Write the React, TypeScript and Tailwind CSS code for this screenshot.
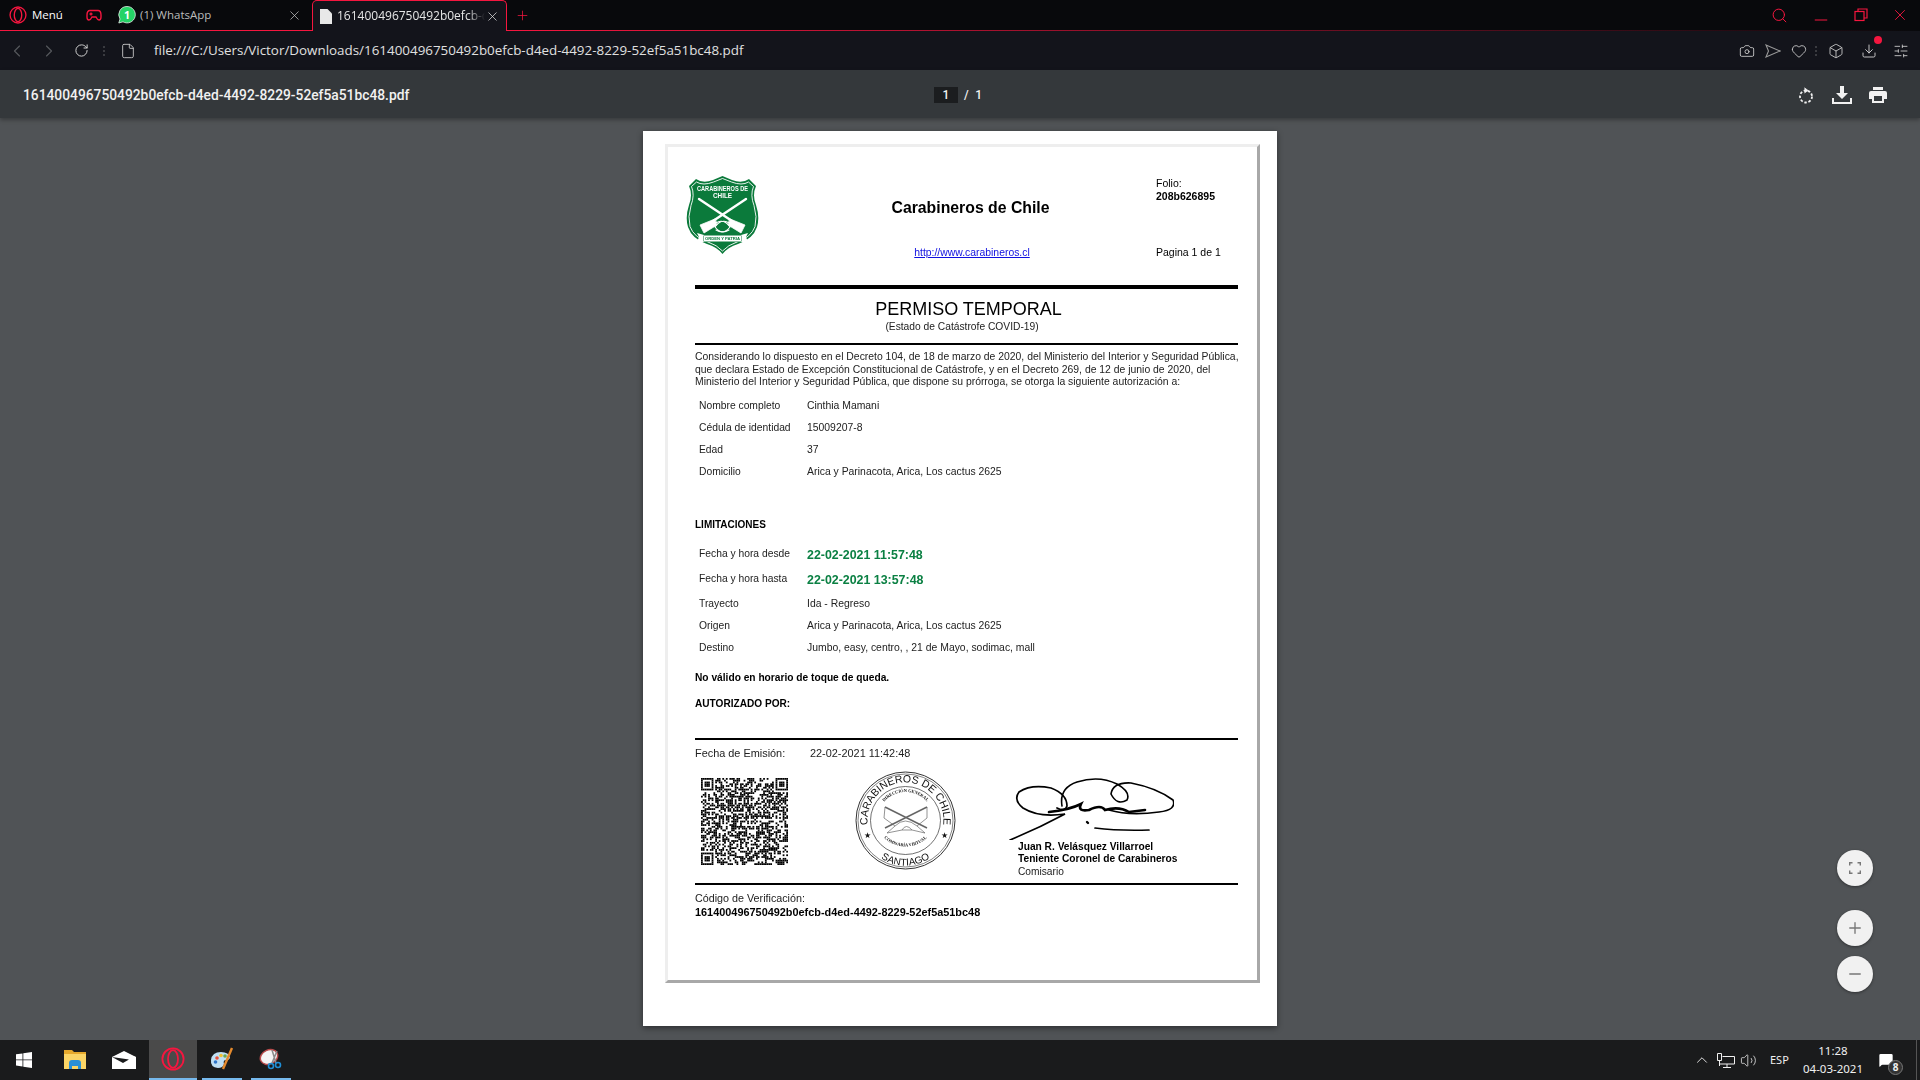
import type { ReactNode } from 'react';
import { ChevronLeft, ChevronRight, RotateCw, File, Camera, Heart, Box, Download, SlidersHorizontal, Search, X, Minus, Plus, ChevronUp, Volume2, MessageSquare } from 'lucide-react';

const RED = '#f5163f';
const urlName = '161400496750492b0efcb-d4ed-4492-8229-52ef5a51bc48';

const Opera = ({ size = 18 }: { size?: number }) => (
  <svg width={size} height={size} viewBox="0 0 24 24" fill="none" stroke={RED} strokeWidth="1.8">
    <circle cx="12" cy="12" r="10.6" />
    <ellipse cx="12" cy="12" rx="5" ry="8.8" />
  </svg>
);

// fake QR matrix, same look as the real one but not scannable
const qrSize = 49;
const finder = (x: number, y: number, ox: number, oy: number) => {
  const dx = x - ox;
  const dy = y - oy;
  if (dx < -1 || dy < -1 || dx > 7 || dy > 7) return null;
  if (dx < 0 || dy < 0 || dx > 6 || dy > 6) return false;
  if (dx === 0 || dy === 0 || dx === 6 || dy === 6) return true;
  if (dx === 1 || dy === 1 || dx === 5 || dy === 5) return false;
  return true;
};
const qrCells: [number, number][] = [];
let seed = 12345;
for (let y = 0; y < qrSize; y++) {
  for (let x = 0; x < qrSize; x++) {
    seed = (seed * 1103515245 + 12345) & 0x7fffffff;
    const f = finder(x, y, 0, 0) ?? finder(x, y, 42, 0) ?? finder(x, y, 0, 42);
    if (f === null ? (seed >> 16) % 100 < 52 : f) qrCells.push([x, y]);
  }
}

const QrCode = () => (
  <svg width="87" height="87" viewBox="0 0 49 49" className="shrink-0">
    {qrCells.map(([x, y]) => (
      <rect key={`${x}-${y}`} x={x} y={y} width="1" height="1" fill="#000" />
    ))}
  </svg>
);

const Shield = () => (
  <svg width="73" height="80" viewBox="0 0 73 80" className="shrink-0">
    <path d="M36.5 1 L46 5 Q56 9 63 4 L70 11 Q66 20 70 30 Q74 42 71 52 Q67 64 52 69 Q42 72 36.5 79 Q31 72 21 69 Q6 64 2 52 Q-1 42 3 30 Q7 20 3 11 L10 4 Q17 9 27 5 Z" fill="#0b7a3b" />
    <path d="M36.500 3.500 L45.500 7 Q56 11 62.500 7 L67.500 11.500 Q64 20 68 30.500 Q71.500 42 69 51.500 Q65 62.500 51 67 Q42 70 36.500 76 Q31 70 22 67 Q8 62.500 4 51.500 Q1.500 42 5 30.500 Q9 20 5.500 11.500 L10.500 7 Q17 11 27.500 7 Z" fill="none" stroke="#fff" strokeWidth="0.9" />
    <text x="36.500" y="15.500" textAnchor="middle" fontSize="6.400" fontWeight="bold" fill="#fff" fontFamily="'Liberation Sans', sans-serif" textLength="51" lengthAdjust="spacingAndGlyphs">CARABINEROS DE</text>
    <text x="36.500" y="22.500" textAnchor="middle" fontSize="6.400" fontWeight="bold" fill="#fff" fontFamily="'Liberation Sans', sans-serif">CHILE</text>
    <g stroke="#fff" strokeLinecap="round" fill="none">
      <path d="M13 24 L52 50" strokeWidth="2.400" />
      <path d="M60 24 L21 50" strokeWidth="2.400" />
      <path d="M44 44 L59 50 L55 58 L42 50 Z" fill="#fff" strokeWidth="0.8" />
      <path d="M29 44 L14 50 L18 58 L31 50 Z" fill="#fff" strokeWidth="0.8" />
      <path d="M24 53 Q36 40 44 52 Q38 60 30 55" strokeWidth="1.100" />
      <path d="M49 53 Q37 40 29 52 Q35 60 43 55" strokeWidth="1.100" />
    </g>
    <path d="M11 58 L18 60 L55 60 L62 58 L60 62 L62 67 L11 67 L13 62 Z" fill="#fff" />
    <rect x="17.500" y="60.500" width="38" height="6" fill="#0b7a3b" />
    <rect x="18" y="61" width="37" height="5" fill="#fff" />
    <text x="36.500" y="65" textAnchor="middle" fontSize="4.200" fill="#0b7a3b" fontFamily="'Liberation Sans', sans-serif" fontWeight="bold">ORDEN Y PATRIA</text>
  </svg>
);

const Seal = () => (
  <svg width="101" height="99" viewBox="0 0 101 99" className="shrink-0">
    <defs>
      <path id="sealTop" d="M15 63 A38 38 0 1 1 86 63" />
      <path id="sealBottom" d="M21.500 84 A45 45 0 0 0 79.500 84" />
      <path id="sealInner" d="M22 49.500 A28.500 28.500 0 0 1 79 49.500" />
      <path id="sealInner2" d="M20 50 A31 31 0 0 0 81 50" />
    </defs>
    <ellipse cx="50.500" cy="49.500" rx="49.500" ry="48.500" fill="none" stroke="#333" strokeWidth="1" />
    <ellipse cx="50.500" cy="49.500" rx="47.500" ry="46.500" fill="none" stroke="#333" strokeWidth="0.6" />
    <ellipse cx="50.500" cy="49.500" rx="35" ry="34" fill="none" stroke="#333" strokeWidth="0.7" />
    <text fontSize="10.500" fill="#111" fontFamily="'Liberation Sans', sans-serif"><textPath href="#sealTop" startOffset="50%" textAnchor="middle">CARABINEROS DE CHILE</textPath></text>
    <text fontSize="10" fill="#111" fontFamily="'Liberation Sans', sans-serif"><textPath href="#sealBottom" startOffset="50%" textAnchor="middle">SANTIAGO</textPath></text>
    <text fontSize="4.400" fontWeight="bold" fill="#111" fontFamily="'Liberation Serif', serif"><textPath href="#sealInner" startOffset="50%" textAnchor="middle">DIRECCIÓN GENERAL</textPath></text>
    <text fontSize="4.400" fontWeight="bold" fill="#111" fontFamily="'Liberation Serif', serif"><textPath href="#sealInner2" startOffset="50%" textAnchor="middle">COMISARÍA VIRTUAL</textPath></text>
    <text x="12" y="67" textAnchor="middle" fontSize="8" fill="#111">★</text>
    <text x="89" y="67" textAnchor="middle" fontSize="8" fill="#111">★</text>
    <g stroke="#666" fill="none" strokeWidth="0.7">
      <path d="M30 36 L72 57 M72 36 L30 57" strokeWidth="1.500" />
      <path d="M30 36 L29 47 L40 55 L32 62 L47 59 L57 59 L70 62 L62 55 L72 47 L72 36" />
      <path d="M40 55 Q50 45 62 55 M47 59 Q51 52 57 59" />
    </g>
  </svg>
);

const Signature = () => (
  <svg width="165" height="64" viewBox="0 0 165 64" fill="none" stroke="#000" strokeLinecap="round" className="shrink-0">
    <path d="M1 64 Q30 52 56 38 Q30 42 14 32 Q4 24 10 16 Q22 8 42 12 Q58 18 58 30 Q56 36 48 32" strokeWidth="1.700" />
    <path d="M53 30 Q50 12 68 6 Q90 -1 108 8 Q122 16 118 24 Q108 30 102 18 Q104 6 122 7 Q148 12 164 24 Q168 34 150 36 Q120 40 100 34" strokeWidth="1.600" />
    <path d="M40 36 Q60 34 72 28 Q68 36 80 34 Q92 28 96 34 Q110 30 120 36 L136 34" strokeWidth="2.600" />
    <path d="M78 46 L79 47" strokeWidth="2.400" />
    <path d="M86 52 Q110 55 140 54" strokeWidth="1.700" />
  </svg>
);

const Row = ({ label, value, tall, green }: { label: string; value: string; tall?: boolean; green?: boolean }) => (
  <div className={`flex items-center pl-1 ${tall ? 'h-[25px]' : 'h-[22px]'}`}>
    <span className="w-[108px] shrink-0 text-[10.3px] leading-3 text-[#222]">{label}</span>
    {green ? (
      <span className="pt-0.5 text-[12.4px] font-bold leading-4 text-[#0b8043]">{value}</span>
    ) : (
      <span className="text-[10.4px] leading-3 text-[#222]">{value}</span>
    )}
  </div>
);

const Paper = () => (
  <div className="h-[895px] w-[634px] shrink-0 bg-white pl-[22px] pt-[13px] shadow-[0_2px_6px_rgba(0,0,0,0.45)] font-['Liberation_Sans',Arial,sans-serif]">
    <div className="h-[839px] w-[595px] border-[3px] border-t-[#eeeeee] border-l-[#eeeeee] border-r-[#a8a8a8] border-b-[#a8a8a8] text-black blur-[0.3px]">
      {/* Header */}
      <div className="flex h-[138px] pl-[18px]">
        <div className="pt-[28px]"><Shield /></div>
        <div className="flex w-[397px] flex-col items-center pl-[26px] pt-[51px]">
          <div className="text-[15.8px] font-bold leading-5">Carabineros de Chile</div>
          <a className="ml-[3px] mt-[29px] text-[10.4px] leading-3 text-[#1010e0] underline">http://www.carabineros.cl</a>
        </div>
        <div className="pt-[30px] text-[10.5px] leading-3">
          <div>Folio:</div>
          <div className="mt-px font-bold">208b626895</div>
          <div className="mt-[44px]">Pagina 1 de 1</div>
        </div>
      </div>

      {/* Body */}
      <div className="ml-[27px] w-[543px]">
        <div className="h-1 bg-black" />
        <div className="mt-[9px] pl-[4px] text-center text-lg leading-[22px]">PERMISO TEMPORAL</div>
        <div className="mt-px pr-[9px] text-center text-[10.25px] leading-3 text-[#222]">(Estado de Catástrofe COVID-19)</div>
        <div className="mt-2.5 h-0.5 bg-black" />
        <div className="mt-1.5 h-[44px] whitespace-nowrap text-[10.4px] leading-[12.5px] text-[#222]">
          <div>Considerando lo dispuesto en el Decreto 104, de 18 de marzo de 2020, del Ministerio del Interior y Seguridad Pública,</div>
          <div>que declara Estado de Excepción Constitucional de Catástrofe, y en el Decreto 269, de 12 de junio de 2020, del</div>
          <div>Ministerio del Interior y Seguridad Pública, que dispone su prórroga, se otorga la siguiente autorización a:</div>
        </div>
        <Row label="Nombre completo" value="Cinthia Mamani" />
        <Row label="Cédula de identidad" value="15009207-8" />
        <Row label="Edad" value="37" />
        <Row label="Domicilio" value="Arica y Parinacota, Arica, Los cactus 2625" />
        <div className="mt-9 text-[10px] font-bold leading-3">LIMITACIONES</div>
        <div className="mt-2.5">
          <Row tall green label="Fecha y hora desde" value="22-02-2021 11:57:48" />
          <Row tall green label="Fecha y hora hasta" value="22-02-2021 13:57:48" />
          <div className="mt-0.5">
            <Row label="Trayecto" value="Ida - Regreso" />
            <Row label="Origen" value="Arica y Parinacota, Arica, Los cactus 2625" />
            <Row label="Destino" value="Jumbo, easy, centro, , 21 de Mayo, sodimac, mall" />
          </div>
        </div>
        <div className="mt-[13px] text-[10.2px] font-bold leading-3">No válido en horario de toque de queda.</div>
        <div className="mt-3.5 text-[10.1px] font-bold leading-3">AUTORIZADO POR:</div>
        <div className="mt-7 h-0.5 bg-black" />
        <div className="mt-1.5 flex text-[10.9px] leading-[14px] text-[#222]">
          <span className="w-[115px]">Fecha de Emisión:</span>
          <span>22-02-2021 11:42:48</span>
        </div>
        <div className="mt-[11px] flex h-[112px]">
          <div className="ml-1.5 mt-[7px]"><QrCode /></div>
          <div className="ml-[67px]"><Seal /></div>
          <div className="ml-[53px] mt-[5px]">
            <Signature />
            <div className="ml-[9px] mt-px text-[10.2px] leading-3">
              <div className="font-bold">Juan R. Velásquez Villarroel</div>
              <div className="font-bold">Teniente Coronel de Carabineros</div>
              <div className="leading-[13px] text-[#222]">Comisario</div>
            </div>
          </div>
        </div>
        <div className="h-0.5 bg-black" />
        <div className="mt-1.5 text-[10.75px] leading-[14px] text-[#222]">Código de Verificación:</div>
        <div className="text-[10.9px] font-bold leading-[14px]">{urlName}</div>
      </div>
    </div>
  </div>
);

const ZoomBtn = ({ children, className }: { children: ReactNode; className: string }) => (
  <button className={`absolute left-[1837px] flex h-9 w-9 items-center justify-center rounded-full bg-[#f1f1f1] text-[#777] shadow-[0_1px_3px_rgba(0,0,0,0.4)] ${className}`}>
    {children}
  </button>
);

export default function App() {
  return (
    <div className="relative flex h-[1080px] w-[1920px] flex-col overflow-hidden font-['Open_Sans',sans-serif]">
      {/* Tab strip */}
      <div className="flex h-[31px] shrink-0 items-end bg-[#08090c] text-[13px] text-[#d8d8d8]">
        <div className="flex h-[31px] w-[312px] items-center border-b border-[#f5163f]">
          <span className="ml-[9px]"><Opera /></span>
          <span className="ml-[5px] w-[44px] text-[11.5px] text-white">Menú</span>
          <svg width="16" height="12" viewBox="0 0 16 12" fill="none" stroke="#f5163f" strokeWidth="1.4" className="ml-[10px]">
            <path d="M4 1.500h8q3 0 3 4.500v2q0 3-2 3-1.500 0-3-3H6q-1.500 3-3 3-2 0-2-3V6q0-4.500 3-4.500Z" />
            <path d="M3.500 5h3M5 3.500v3M11 4.500v.1M12.500 6v.1" />
          </svg>
          <svg width="18" height="18" viewBox="0 0 18 18" className="ml-4">
            <path d="M9 .5a8.200 8.200 0 1 1-4 15.300L.8 17l1.200-4A8.200 8.200 0 0 1 9 .5Z" fill="#25d366" stroke="#e8e8e8" strokeWidth="0.8" />
            <text x="9" y="12.500" textAnchor="middle" fontSize="10.500" fontWeight="bold" fill="#fff" fontFamily="'Open Sans', sans-serif">1</text>
          </svg>
          <span className="ml-1 w-[147px] text-[11.5px] text-[#bbbbbb]">(1) WhatsApp</span>
          <X size={15} strokeWidth={1.2} className="text-[#c0c0c0]" />
        </div>
        <div className="flex h-[31px] w-[195px] items-center rounded-t-[5px] border-x border-t border-[#f5163f] bg-[#13141b] pl-[7px]">
          <svg width="12" height="15" viewBox="0 0 12 15" fill="#e8e8e8"><path d="M0 0h7.500L12 4.500V15H0Z" /></svg>
          <span className="ml-[5px] w-[148px] overflow-hidden whitespace-nowrap text-xs text-[#e6e6e6] [mask-image:linear-gradient(to_right,#000_88%,transparent)]">{urlName}</span>
          <X size={15} strokeWidth={1.2} className="text-[#e0e0e0]" />
        </div>
        <div className="flex h-[31px] flex-1 flex-col">
          <div className="flex min-h-0 flex-1 items-center pl-[8px]">
            <Plus size={15} strokeWidth={1.2} className="text-[#f5163f]" />
            <div className="ml-auto flex items-center pr-[11px] text-[#f5163f]">
              <Search size={17} strokeWidth={1.4} />
              <Minus size={20} strokeWidth={1.2} className="ml-[23px] mt-[10px]" />
              <svg width="14" height="14" viewBox="0 0 14 14" fill="none" stroke="#f5163f" strokeWidth="1.2" className="ml-[23px]">
                <rect x="1" y="3.500" width="9" height="9" /><path d="M4 3.500V1h9v9h-3" />
              </svg>
              <X size={18} strokeWidth={1.2} className="ml-[23px]" />
            </div>
          </div>
          <div className="h-px bg-gradient-to-r from-[#f5163f] to-transparent" />
        </div>
      </div>

      {/* Address bar */}
      <div className="flex h-[39px] shrink-0 items-center bg-[#13141b] text-sm text-[#e0e0e0]">
        <ChevronLeft size={20} strokeWidth={1.4} className="ml-[7px] text-[#55575c]" />
        <ChevronRight size={20} strokeWidth={1.4} className="ml-3 text-[#55575c]" />
        <RotateCw size={15} strokeWidth={1.6} className="ml-[15px] text-[#d0d0d0]" />
        <span className="ml-[14px] h-[10px] w-0.5 border-l-2 border-dotted border-[#3a3b40]" />
        <File size={16} strokeWidth={1.3} className="ml-[15px] text-[#d0d0d0]" />
        <span className="ml-[18px] text-[13.4px]">file:///C:/Users/Victor/Downloads/{urlName}.pdf</span>
        <div className="ml-auto flex items-center pr-[11px] text-[#cfcfcf]">
          <Camera size={16} strokeWidth={1.3} />
          <svg width="16" height="14" viewBox="0 0 16 14" fill="none" stroke="#999" strokeWidth="1.1" className="ml-[10px]">
            <path d="M1 1 15 7 1 13 3.500 7Z" />
          </svg>
          <Heart size={16} strokeWidth={1.3} className="ml-[10px]" />
          <span className="ml-[8px] h-[10px] w-0.5 border-l-2 border-dotted border-[#3a3b40]" />
          <Box size={16} strokeWidth={1.3} className="ml-[11px]" />
          <span className="relative ml-[17px]">
            <Download size={16} strokeWidth={1.4} />
            <span className="absolute -right-[5px] -top-[7px] h-2 w-2 rounded-full bg-[#f5163f]" />
          </span>
          <SlidersHorizontal size={16} strokeWidth={1.3} className="ml-4" />
        </div>
      </div>

      {/* PDF toolbar */}
      <div className="relative z-10 flex h-12 shrink-0 items-center bg-[#34383b] pt-0.5 text-[#f1f1f1] shadow-[0_2px_4px_rgba(0,0,0,0.3)]">
        <span className="ml-[23px] w-[911px] font-['Roboto',sans-serif] text-[13.8px] font-medium">{urlName}.pdf</span>
        <span className="flex h-4 w-6 items-center justify-center bg-[#1b1d1f] font-['Roboto',sans-serif] text-xs font-medium">1</span>
        <span className="ml-1.5 font-['Roboto',sans-serif] text-xs font-medium">/</span>
        <span className="ml-[6.5px] font-['Roboto',sans-serif] text-xs font-medium">1</span>
        <div className="ml-auto flex items-center pr-[33px]">
          <svg width="16" height="17" viewBox="0 0 16 17" fill="none" stroke="#f1f1f1" strokeWidth="1.800">
            <circle cx="8" cy="9.500" r="6" strokeDasharray="2.500 1.700" />
            <path d="M6.500 0.800 10 3.500 6.500 6" fill="#f1f1f1" strokeWidth="0.8" />
          </svg>
          <svg width="20" height="20" viewBox="0 0 20 20" fill="#f1f1f1" className="ml-[18px]">
            <path d="M8 1h4v7h4l-6 6-6-6h4ZM0 13h2v4h16v-4h2v6H0Z" />
          </svg>
          <svg width="18" height="16" viewBox="0 0 18 16" fill="#f1f1f1" className="ml-[17px]">
            <path d="M4 0h10v3H4ZM2 4h14q2 0 2 2v6h-3v4H3v-4H0V6q0-2 2-2Zm3 5v5h8V9Z" />
          </svg>
        </div>
      </div>

      {/* Viewer */}
      <div className="flex min-h-0 flex-1 justify-center overflow-hidden bg-[#505356] pt-[13px]">
        <Paper />
      </div>

      <ZoomBtn className="top-[850px]">
        <svg width="12" height="12" viewBox="0 0 12 12" fill="none" stroke="#777" strokeWidth="1.4"><path d="M0.700 3.500V.7h2.800M8.500.7h2.800v2.800M11.300 8.500v2.800H8.500M3.500 11.300H.7V8.500" /></svg>
      </ZoomBtn>
      <ZoomBtn className="top-[910px]"><Plus size={18} strokeWidth={1.8} /></ZoomBtn>
      <ZoomBtn className="top-[956px]"><Minus size={18} strokeWidth={1.8} /></ZoomBtn>

      {/* Taskbar */}
      <div className="relative z-10 flex h-10 shrink-0 items-center bg-[#1a1b1c] text-[#f0f0f0]">
        <svg width="16" height="16" viewBox="0 0 16 16" fill="#fff" className="ml-4"><path d="M0 2.300 6.500 1.400V7.500H0ZM7.300 1.300 16 0V7.500H7.300ZM0 8.300H6.500V14.500L0 13.600ZM7.300 8.300H16V16L7.300 14.700Z" /></svg>
        <svg width="22" height="20" viewBox="0 0 22 20" className="ml-8">
          <path d="M0 0h8l2 2h12v16H0Z" fill="#e6a92c" /><path d="M0 4h22v15H0Z" fill="#fbd566" /><path d="M5 13q0-3 3-3h6q3 0 3 3v6h-3v-3H8v3H5Z" fill="#2a8fd6" />
        </svg>
        <svg width="24" height="18" viewBox="0 0 24 18" className="ml-[26px]"><path d="M0 6 12 0l12 6v12H0Z" fill="#fff" /><path d="M0 6 17 8.500 11 12Z" fill="#1a1b1c" /><path d="M24 6 17 8.500 12 3Z" fill="#fff" /></svg>
        <div className="ml-[13px] flex h-10 w-12 items-center justify-center border-b-2 border-[#76b9ed] bg-[#4a4a4a]"><Opera size={24} /></div>
        <div className="ml-[5px] flex h-10 w-10 items-center justify-center border-b-2 border-[#76b9ed]">
          <svg width="24" height="24" viewBox="0 0 24 24"><path d="M1 13Q2 5 11 5q8 0 9 6-2 3-5 2-2 1-1 4-1 4-6 4-8-1-7-8Z" fill="#bfe0f4" /><circle cx="7" cy="11" r="1.800" fill="#e8503a" /><circle cx="11" cy="8.500" r="1.800" fill="#f1c232" /><circle cx="15" cy="9" r="1.800" fill="#6aa84f" /><circle cx="5.500" cy="15" r="1.800" fill="#2f75c9" /><path d="M22 1 13 22" stroke="#e58a2d" strokeWidth="2.400" /></svg>
        </div>
        <div className="ml-[9px] flex h-10 w-10 items-center justify-center border-b-2 border-[#76b9ed]">
          <svg width="24" height="22" viewBox="0 0 24 22" fill="none"><ellipse cx="10" cy="9" rx="9" ry="7" fill="#f4f4f4" stroke="#b84a4a" strokeWidth="1.500" transform="rotate(-25 10 9)" /><path d="M13 2 17 15M18 3 13 15" stroke="#8a8a8a" strokeWidth="1.500" /><circle cx="12" cy="18" r="2.500" stroke="#1f8fd6" strokeWidth="1.600" /><circle cx="19" cy="17" r="2.500" stroke="#1f8fd6" strokeWidth="1.600" /></svg>
        </div>
        <div className="ml-auto flex items-center font-['Noto_Sans',sans-serif] text-xs">
          <ChevronUp size={18} strokeWidth={1.2} />
          <svg width="18" height="15" viewBox="0 0 18 15" fill="none" stroke="#f0f0f0" className="ml-[6px]"><path d="M5.500 3.500H17.500V11H3M10 11v3M6 14.500h8M.5.500h4v7h-4ZM2.500 8v5" /></svg>
          <Volume2 size={17} strokeWidth={1.1} className="ml-[5px]" />
          <span className="ml-[13px] w-[30px] text-[11px]">ESP</span>
          <div className="flex w-[66px] flex-col items-center text-[11.5px] leading-[18px]">
            <span>11:28</span>
            <span>04-03-2021</span>
          </div>
          <span className="relative ml-3 mr-[22px]">
            <MessageSquare size={16} fill="#fff" strokeWidth={0} />
            <span className="absolute -bottom-[7px] -right-[9px] flex h-[15px] w-[15px] items-center justify-center rounded-full border border-[#777] bg-[#333] text-[10px] font-bold">8</span>
          </span>
          <span className="h-10 w-px bg-[#555]" />
          <span className="w-[3px]" />
        </div>
      </div>
    </div>
  );
}
